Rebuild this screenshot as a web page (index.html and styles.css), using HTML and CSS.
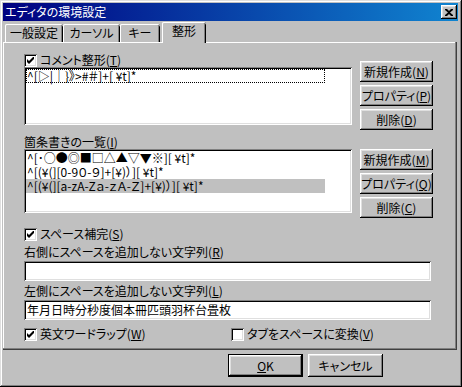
FILE: index.html
```html
<!DOCTYPE html>
<html lang="ja">
<head>
<meta charset="utf-8">
<title>エディタの環境設定</title>
<link rel="stylesheet" href="styles.css">
</head>
<body>
<div class="window">
  <div class="titlebar">
    <span class="title">エディタの環境設定</span>
    <span class="close"><svg width="8" height="7" viewBox="0 0 8 7"><path d="M0 0h2l2 2 2-2h2v1L5 3.5 8 6v1H6L4 5 2 7H0V6l3-2.5L0 1z" fill="#000"/></svg></span>
  </div>
  <div class="tabs">
    <div class="tab t1">一般設定</div>
    <div class="tab t2">カーソル</div>
    <div class="tab t3">キー</div>
    <div class="tab active">整形</div>
  </div>
  <div class="panel">
    <div class="group g1">
      <div class="col">
        <div class="check"><span class="box on"><svg width="7" height="7" viewBox="0 0 7 7"><path d="M0 2l2 2 5-5v3L2 7 0 5z" fill="#000"/></svg></span><span>コメント整形(<u>T</u>)</span></div>
        <div class="list list1">
          <div class="item focus">^[▷|｜}》&gt;#＃]+[ ¥t]*</div>
        </div>
      </div>
      <div class="btns b1">
        <div class="btn">新規作成(<u>N</u>)</div>
        <div class="btn">プロパティ(<u>P</u>)</div>
        <div class="btn">削除(<u>D</u>)</div>
      </div>
    </div>
    <div class="group g2">
      <div class="col">
        <div class="label">箇条書きの一覧(<u>I</u>)</div>
        <div class="list list2">
          <div class="item">^[･○●◎■□△▲▽▼※][ ¥t]*</div>
          <div class="item">^[(¥(][0-9０-９]+[¥)）][ ¥t]*</div>
          <div class="item sel">^[(¥(][a-zA-Zａ-ｚＡ-Ｚ]+[¥)）][ ¥t]*</div>
        </div>
      </div>
      <div class="btns b2">
        <div class="btn">新規作成(<u>M</u>)</div>
        <div class="btn">プロパティ(<u>Q</u>)</div>
        <div class="btn">削除(<u>C</u>)</div>
      </div>
    </div>
    <div class="check c-space"><span class="box on"><svg width="7" height="7" viewBox="0 0 7 7"><path d="M0 2l2 2 5-5v3L2 7 0 5z" fill="#000"/></svg></span><span>スペース補完(<u>S</u>)</span></div>
    <div class="label l-right">右側にスペースを追加しない文字列(<u>R</u>)</div>
    <div class="field f1"></div>
    <div class="label l-left">左側にスペースを追加しない文字列(<u>L</u>)</div>
    <div class="field f2">年月日時分秒度個本冊匹頭羽杯台畳枚</div>
    <div class="checks">
      <div class="check c-wrap"><span class="box on"><svg width="7" height="7" viewBox="0 0 7 7"><path d="M0 2l2 2 5-5v3L2 7 0 5z" fill="#000"/></svg></span><span>英文ワードラップ(<u>W</u>)</span></div>
      <div class="check"><span class="box"></span><span>タブをスペースに変換(<u>V</u>)</span></div>
    </div>
  </div>
  <div class="footer">
    <div class="btn wide default"><u>O</u>K</div>
    <div class="btn wide">キャンセル</div>
  </div>
</div>
</body>
</html>
```

FILE: styles.css
```css
* { box-sizing: border-box; }
html, body { margin: 0; padding: 0; }
body {
  width: 462px;
  height: 387px;
  overflow: hidden;
  background: #c0c0c0;
  font-family: "Noto Sans CJK JP", "Noto Sans", sans-serif;
  font-size: 12px;
  color: #000;
  font-feature-settings: "palt";
}
u { text-decoration: underline; text-underline-offset: 1px; }

.window {
  width: 462px;
  height: 387px;
  background: #c0c0c0;
  padding: 3px 4px 3px 3px;
  box-shadow: inset -1px -1px #000, inset 1px 1px #dfdfdf, inset -2px -2px #808080, inset 2px 2px #fff;
  display: flex;
  flex-direction: column;
}

.titlebar {
  height: 18px;
  flex: none;
  background: linear-gradient(to right, #000080, #1084d0);
  display: flex;
  align-items: center;
  justify-content: space-between;
  padding: 0 1px 0 2px;
  color: #fff;
}
.title { line-height: 18px; }
.close {
  width: 16px;
  height: 14px;
  background: #c0c0c0;
  box-shadow: inset -1px -1px #000, inset 1px 1px #fff, inset -2px -2px #808080, inset 2px 2px #dfdfdf;
  display: flex;
  align-items: center;
  justify-content: center;
}
.close svg { display: block; }

.tabs {
  flex: none;
  height: 20px;
  margin-top: 1px;
  padding-left: 2px;
  display: flex;
  align-items: flex-end;
  position: relative;
  z-index: 1;
}
.tab {
  height: 18px;
  line-height: 17px;
  padding: 0 5px;
  text-align: center;
  border-radius: 2px 2px 0 0;
  box-shadow: inset 1px 0 #fff, inset 0 1px #fff, inset -1px 0 #000, inset -2px 0 #808080;
}
.t1 { width: 58px; }
.t2 { width: 57px; }
.t3 { width: 40px; }
.tab.active {
  width: 44px;
  height: 21px;
  line-height: 18px;
  margin-left: 2px;
  margin-bottom: -1px;
  background: #c0c0c0;
}

.panel {
  flex: none;
  height: 308px;
  margin-right: 1px;
  padding: 11px 0 0 21px;
  box-shadow: inset -1px -1px #404040, inset -2px -2px #808080, inset 1px 1px #fff;
}

.group { display: flex; align-items: flex-start; }
.col { width: 328px; }
.btns {
  margin-left: 8px;
  width: 73px;
  display: flex;
  flex-direction: column;
  gap: 3px;
}
.b1 { margin-top: 8px; }
.b2 { margin-top: 14px; }
.g2 { margin-top: 5px; }

.btn {
  height: 21px;
  line-height: 21px;
  text-align: center;
  background: #c0c0c0;
  white-space: nowrap;
  box-shadow: inset -1px -1px #000, inset 1px 1px #fff, inset -2px -2px #808080, inset 2px 2px #dfdfdf;
}

.check {
  display: flex;
  align-items: center;
  gap: 3px;
  height: 14px;
  line-height: 14px;
}
.box {
  width: 13px;
  height: 13px;
  flex: none;
  background: #fff;
  box-shadow: inset 1px 1px #808080, inset -1px -1px #fff, inset 2px 2px #000, inset -2px -2px #dfdfdf;
  display: flex;
  align-items: center;
  justify-content: center;
}
.box svg { display: block; }

.label { height: 14px; line-height: 14px; white-space: nowrap; }

.list, .field {
  background: #fff;
  box-shadow: inset 1px 1px #808080, inset -1px -1px #fff, inset 2px 2px #000, inset -2px -2px #dfdfdf;
  padding: 2px;
}
.list1 { height: 58px; }
.list2 { height: 64px; }
.item {
  width: 299px;
  height: 14px;
  line-height: 14px;
  padding-left: 1px;
  white-space: nowrap;
}
.item.focus { outline: 1px dotted #000; outline-offset: -1px; }
.item.sel { background: #c0c0c0; }

.c-space { margin-top: 9px; }
.l-right { margin-top: 4px; }
.f1 { margin-top: 2px; }
.l-left { margin-top: 3px; }
.f2 { margin-top: 2px; }
.field {
  width: 407px;
  height: 20px;
  line-height: 16px;
  padding: 2px 3px;
}
.checks { display: flex; margin-top: 7px; }
.c-wrap { width: 207px; }

.footer {
  flex: none;
  display: flex;
  justify-content: flex-end;
  gap: 5px;
  padding: 4px 75px 0 0;
}
.btn.wide { width: 75px; height: 23px; line-height: 23px; }
.btn.default {
  box-shadow: inset 0 0 0 1px #000, inset -2px -2px #000, inset 2px 2px #fff, inset -3px -3px #808080, inset 3px 3px #dfdfdf;
}
```
